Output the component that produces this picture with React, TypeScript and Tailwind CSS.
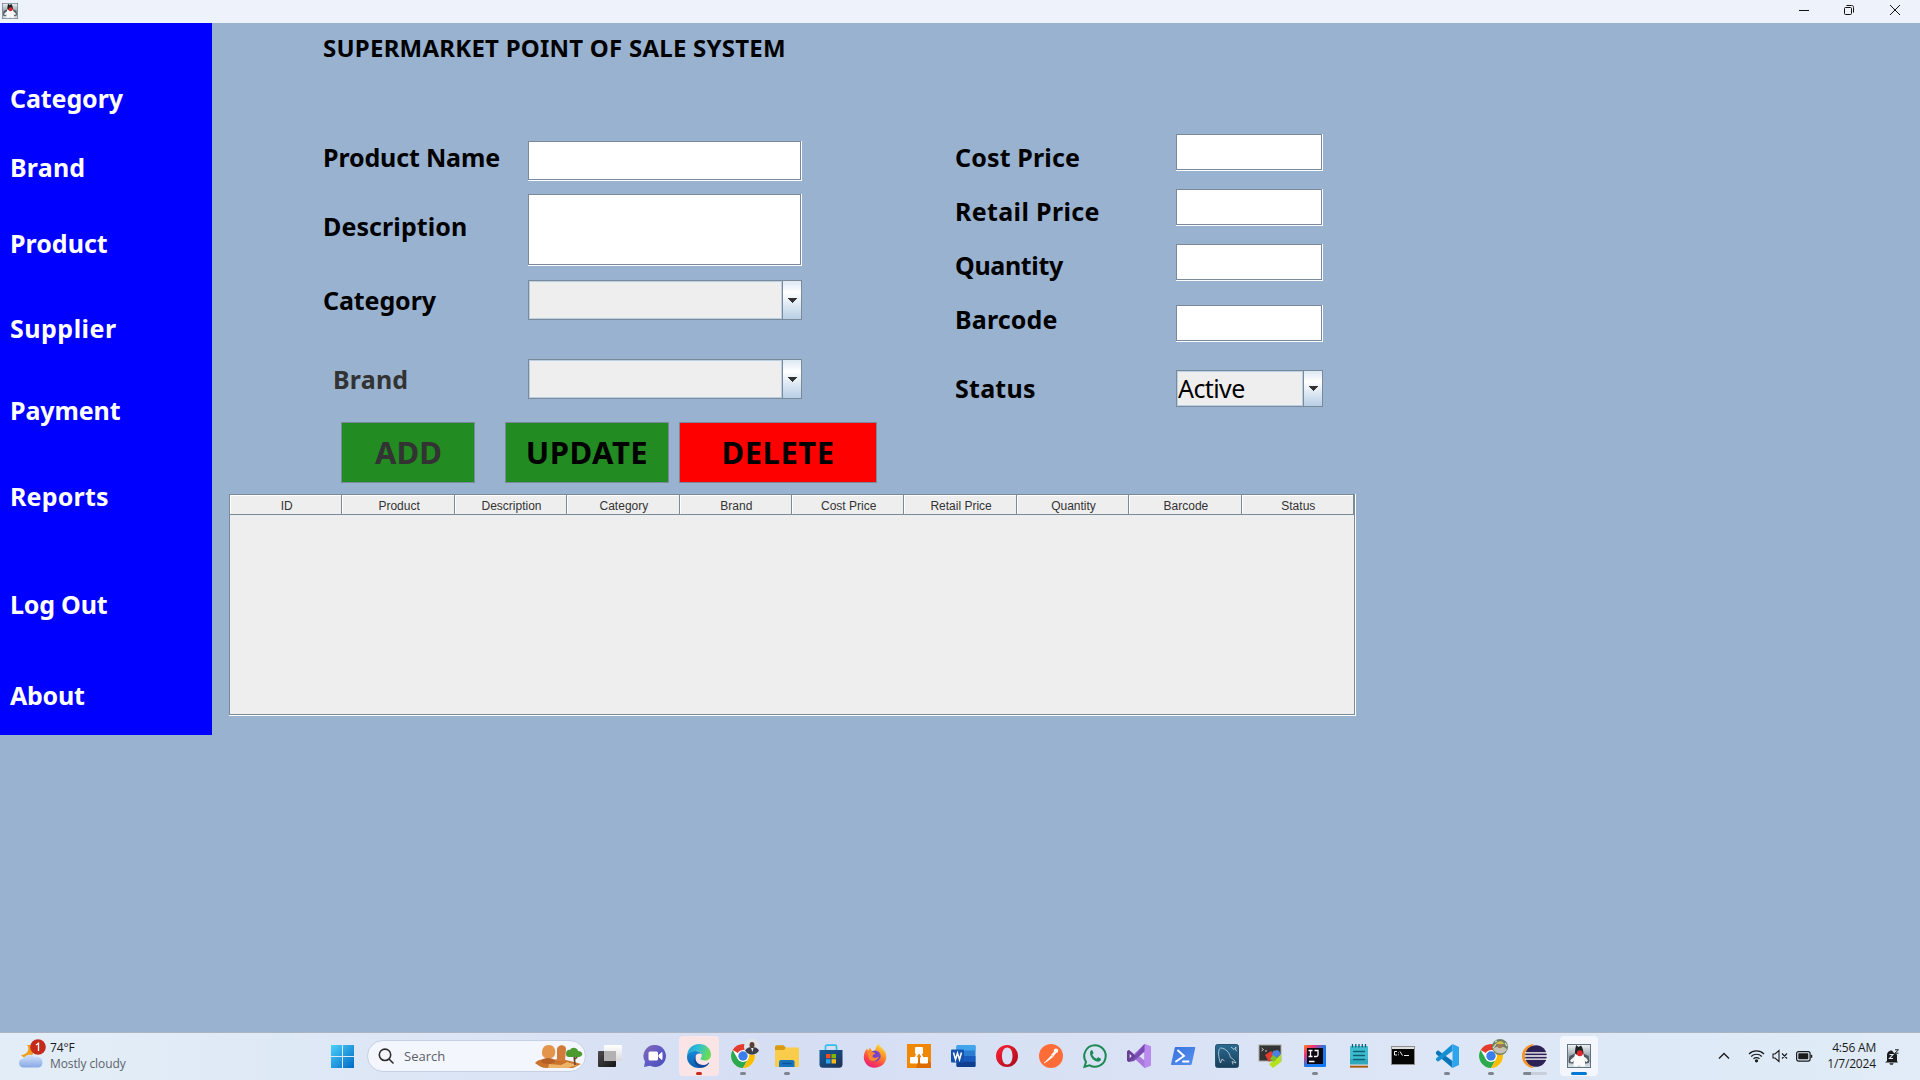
import React from "react";

const LABEL = "h-[30px] whitespace-nowrap text-[25px] font-bold leading-[30px] ";

const menu = [
  ["Category", "mt-[60px] tracking-[-0.1px]"],
  ["Brand", "mt-[39px] tracking-[0.2px]"],
  ["Product", "mt-[46px]"],
  ["Supplier", "mt-[55px] tracking-[0.5px]"],
  ["Payment", "mt-[52px] tracking-[-0.1px]"],
  ["Reports", "mt-[56px] tracking-[0.2px]"],
  ["Log Out", "mt-[78px] tracking-[-0.2px]"],
  ["About", "mt-[61px] tracking-[-0.25px]"],
];

const leftLabels = [
  ["Product Name", "mt-0 text-black tracking-[-0.15px]"],
  ["Description", "mt-[39px] text-black tracking-[0.1px]"],
  ["Category", "mt-[44px] text-black tracking-[-0.1px]"],
  ["Brand", "mt-[49px] pl-[10px] text-[#333333] tracking-[0.2px]"],
];

const rightLabels = [
  ["Cost Price", "mt-0 tracking-[0.15px]"],
  ["Retail Price", "mt-[24px] tracking-[0.35px]"],
  ["Quantity", "mt-[24px] tracking-[-0.35px]"],
  ["Barcode", "mt-[24px] tracking-[0.15px]"],
  ["Status", "mt-[39px] tracking-[0.25px]"],
];

const columns = ["ID", "Product", "Description", "Category", "Brand", "Cost Price", "Retail Price", "Quantity", "Barcode", "Status"];

function Field({ className }: { className: string }) {
  return (
    <div className={"border-b border-r border-white " + className}>
      <div className="h-full w-full border border-[#7a8a99] bg-white" />
    </div>
  );
}

function Combo({ className, value }: { className: string; value?: string }) {
  return (
    <div className={"flex border border-[#7a8a99] " + className}>
      <div className="min-w-0 flex-1 overflow-hidden border border-[#b8cfe5] bg-[#eeeeee] text-[25px] leading-[33px] tracking-[-0.6px] text-black">
        {value}
      </div>
      <div className="flex w-[19px] items-center border-l border-[#7a8a99] bg-linear-to-b from-[#dde8f3] via-white via-30% to-[#b8cfe5] pl-[4px]">
        <svg width="10" height="5" viewBox="0 0 10 5" shapeRendering="crispEdges"><path d="M0 0h10L5 5z" fill="#333" /></svg>
      </div>
    </div>
  );
}

function Duke({ size }: { size: number }) {
  return (
    <svg width={size} height={size} viewBox="0 0 24 24">
      <defs>
        <linearGradient id="dukeBg" x1="0" y1="0" x2="0" y2="1"><stop offset="0" stopColor="#f1f4f6" /><stop offset=".5" stopColor="#98a5ad" /><stop offset="1" stopColor="#dfe5e8" /></linearGradient>
      </defs>
      <rect x=".5" y=".5" width="23" height="23" fill="url(#dukeBg)" stroke="#5f7485" />
      <path d="M1.500 17l1-5 5.500-2.500V20L2 19zM22.500 17l-1-5-5-2.500V20l5-1z" fill="#50595f" />
      <path d="M8.500 8C7.500 12 6 17 6.500 22l3 .7 2.500-2 3 2 3-.7c.5-5-1-10-2.500-14z" fill="#fbfbfb" />
      <path d="M9.200 1l2.300 2L14 1.500c1.500 2 2.300 4.500 2.500 8-2.500 2-6 2-8.500 0C8 6 8.500 3 9.200 1z" fill="#1d2225" />
      <path d="M8 12.500c-2 1-4 2.500-5 4.500l1.800 1.500L8 16zM16.500 12.500c2 .7 3.500 2 4.500 4l-1.500 1.800-3-2.300z" fill="#f4f4f4" />
      <circle cx="12.800" cy="9.300" r="3" fill="#e0252b" />
    </svg>
  );
}

function Chrome({ second }: { second?: boolean }) {
  return (
    <svg width="30" height="30" viewBox="0 0 30 30" className="overflow-visible">
      <circle cx="15" cy="15" r="12" fill="#fff" />
      <path d="M15 15L4.610 9A12 12 0 0 1 25.390 9H15z" fill="#e33b2e" />
      <path d="M4.610 9A12 12 0 0 0 15 27l5.200-9-5.200 3-5.200-3z" fill="#2da94f" />
      <path d="M25.390 9A12 12 0 0 1 15 27l5.200-9L19 10.500V9z" fill="#fdbd00" />
      <circle cx="15" cy="15" r="6" fill="#fff" />
      <circle cx="15" cy="15" r="4.700" fill="#3b7ded" />
      <g transform="translate(24 6)">
        <circle r="8" fill={second ? "#70805f" : "#e2e5e7"} />
        {second ? (
          <>
            <path d="M-7 2c2-2 4-2.500 7-2.500s6 1 7 3A8 8 0 0 1-7 2z" fill="#c7c3b4" />
            <circle cy="-1.500" r="2.800" fill="#a17a53" />
            <path d="M-4-3c1-3 7-4 8 0z" fill="#d4bd4b" />
            <path d="M-7 1l3-4M5-4l2 3M-5-5l2-1" stroke="#dfe6cc" strokeWidth="1.200" />
          </>
        ) : (
          <>
            <path d="M-7 3.500C-5.500 1-3 0 0 0s6 1 7 3.500A8 8 0 0 1-7 3.500z" fill="#3a3f4b" />
            <ellipse cy="-2" rx="2.500" ry="3" fill="#5a4036" />
            <path d="M-1 1h2.500L.5 5z" fill="#e8e8ea" />
          </>
        )}
      </g>
    </svg>
  );
}

const S = ({ children }: { children: React.ReactNode }) => (
  <svg width="24" height="24" viewBox="0 0 24 24" className="overflow-visible">{children}</svg>
);

const TaskView = () => (
  <S>
    <defs>
      <linearGradient id="tv" x1="0" y1="0" x2="1" y2="1"><stop offset="0" stopColor="#4c4c4c" /><stop offset="1" stopColor="#151515" /></linearGradient>
      <linearGradient id="tvw" x1="0" y1="0" x2="0" y2="1"><stop offset="0" stopColor="#fff" /><stop offset="1" stopColor="#d9d9dc" /></linearGradient>
    </defs>
    <rect x="5" y="1" width="18" height="16" rx="1" fill="url(#tvw)" />
    <rect x="-1" y="7" width="18" height="16" rx="1" fill="url(#tv)" />
    <rect x="5" y="7" width="12" height="10" fill="#b2b2b2" />
  </S>
);

const Chat = () => (
  <S>
    <defs><linearGradient id="chat" x1="0" y1="0" x2="1" y2="1"><stop offset="0" stopColor="#8a67b5" /><stop offset=".5" stopColor="#5f5bc4" /><stop offset="1" stopColor="#4a4fb8" /></linearGradient></defs>
    <path d="M12 1a11 11 0 1 1-5 20.800L1 23l1-5.500A11 11 0 0 1 12 1z" fill="url(#chat)" />
    <rect x="5.500" y="7.500" width="9.500" height="9" rx="1.500" fill="#fff" />
    <path d="M16 11l3-2.500v7L16 13z" fill="#fff" stroke="#fff" strokeLinejoin="round" />
  </S>
);

const Edge = () => (
  <S>
    <defs>
      <linearGradient id="e1" x1="0" y1="0" x2="1" y2=".3"><stop offset="0" stopColor="#1a9fd9" /><stop offset=".5" stopColor="#31bfd4" /><stop offset="1" stopColor="#68dc58" /></linearGradient>
      <linearGradient id="e2" x1="0" y1="0" x2="0" y2="1"><stop offset="0" stopColor="#1689d8" /><stop offset="1" stopColor="#0d5eae" /></linearGradient>
    </defs>
    <path d="M12 0c7 0 12 5 12 10.500 0 4-3 6-6 6-2.500 0-4.500-1-4.500-2 0-.7 1.300-1 1.300-3 0-2.500-2.500-4.500-6-4.500C4 7 0 10.500 0 13 0 5 5.500 0 12 0z" fill="url(#e1)" />
    <path d="M0 13c0-3.500 4-6 8.500-6 3 0 5 1.300 6 3-3-1.500-6.500.5-6.500 4.500 0 5 4.500 9 9.500 8.500-1.700.7-3.500 1-5.500 1C5 24 0 19 0 13z" fill="url(#e2)" />
    <path d="M9 11.500c-2 6 3 10 8 9.500 2-.2 3.500-1.300 4.500-2.300.4-.3.900 0 .6.500C20 22.500 17 24 13.500 23.500 8 22.500 5.500 16 9 11.500z" fill="#12499a" />
  </S>
);

const Folder = () => (
  <S>
    <path d="M0 3c0-1 .7-1.700 1.700-1.700h7L11 4v3H0z" fill="#d99a10" />
    <path d="M0 6h9l2-2.500h12c.7 0 1 .5 1 1V22c0 .6-.4 1-1 1H1c-.6 0-1-.4-1-1z" fill="#f9cd4b" />
    <path d="M4 23v-5c0-1 .8-2 2-2h11.500c1.200 0 2 1 2 2v5z" fill="#1673bd" />
    <path d="M7 19.500h9.500" stroke="#0b5496" strokeWidth="1.500" />
  </S>
);

const Store = () => (
  <S>
    <defs><linearGradient id="st" x1="0" y1="0" x2="1" y2="1"><stop offset="0" stopColor="#115c9b" /><stop offset="1" stopColor="#203052" /></linearGradient></defs>
    <path d="M6.500 7V2.500c0-.8.500-1.300 1.300-1.300h8.400c.8 0 1.300.5 1.300 1.300V7" fill="none" stroke="#35bdf1" strokeWidth="1.700" />
    <path d="M.5 6h23v14.500c0 2-1.300 3.300-3.300 3.300H3.800c-2 0-3.300-1.300-3.300-3.300z" fill="url(#st)" />
    <path d="M7 10h4.500v4.300H7z" fill="#f04e23" /><path d="M12.500 10H17v4.300h-4.500z" fill="#7db900" />
    <path d="M7 15.200h4.500v4.300H7z" fill="#25a3ec" /><path d="M12.500 15.200H17v4.300h-4.500z" fill="#fdb813" />
  </S>
);

const Firefox = () => (
  <S>
    <defs>
      <linearGradient id="ff" x1=".8" y1="0" x2=".3" y2="1"><stop offset="0" stopColor="#ffe03b" /><stop offset=".4" stopColor="#ff9422" /><stop offset=".75" stopColor="#fb4150" /><stop offset="1" stopColor="#e5207b" /></linearGradient>
    </defs>
    <path d="M15.500 0c1 3 5 4.500 7 8.500 3 8-2.500 15-10.500 15.200C5 24 .5 18.500.8 12.500 1 9 2.500 6 4 4.500L5 7l2-3.500L9 7l3.500-.5C12 4 13.500 1.500 15.500 0z" fill="url(#ff)" />
    <circle cx="12" cy="12" r="5.500" fill="#7544c9" />
    <path d="M4.500 8C8 6.500 11 8 12.500 10c-2 .3-3 1-3 2.200 0 2 4 2.300 6.500 0-1 4.500-7 6.500-10 2.800z" fill="#fd8a2c" />
    <path d="M13 7c3 0 5 3 4.500 6.500C16 16 19 11 13 7z" fill="#9b4ed0" />
  </S>
);

const Drawio = () => (
  <S>
    <rect width="24" height="24" fill="#f08705" />
    <path d="M14 9l10 10v5H9z" fill="#dd6b00" />
    <path d="M12 7L6.500 17M12 7l5.500 10" stroke="#fff" strokeWidth="2" />
    <rect x="8" y="3" width="8" height="7" rx="1" fill="#fff" /><rect x="3" y="13" width="8" height="6.500" rx="1" fill="#fff" /><rect x="13" y="13" width="8" height="6.500" rx="1" fill="#fff" />
  </S>
);

const Word = () => (
  <S>
    <rect x="5.500" y="1" width="19" height="22" rx="1.500" fill="#2b7cd3" />
    <path d="M5.500 6.500V2.500C5.500 1.500 6 1 7 1h16c1 0 1.500.5 1.500 1.500v4z" fill="#41a5ee" />
    <path d="M5.500 12h19v5.500h-19z" fill="#185abd" /><path d="M5.500 17.500h19v4c0 1-.5 1.500-1.500 1.500H7c-1 0-1.500-.5-1.500-1.500z" fill="#103f91" />
    <rect x="0" y="5.500" width="13" height="13" rx="1" fill="#1552ae" />
    <path d="M2.500 8.500l2 7 2-6.500 2 6.500 2-7" fill="none" stroke="#fff" strokeWidth="1.500" />
  </S>
);

const Opera = () => (
  <S>
    <defs><linearGradient id="op" x1="0" y1="0" x2="1" y2="1"><stop offset="0" stopColor="#ff2436" /><stop offset="1" stopColor="#a60a18" /></linearGradient></defs>
    <path fillRule="evenodd" d="M12 1c6.500 0 11 5 11 11s-4.500 11-11 11S1 18 1 12 5.500 1 12 1zm.2 2.500C9 3.500 7 7 7 12s2 8.500 5.200 8.500 5.300-3.500 5.300-8.500-2-8.500-5.300-8.500z" fill="url(#op)" />
  </S>
);

const Postman = () => (
  <S>
    <circle cx="12" cy="12" r="12" fill="#ff6c37" />
    <path d="M6.500 17.500l7-7.500 2 2-8 6z" fill="#fff" /><path d="M12 11l3-3.500 2 2-3.500 3z" fill="#fff" />
    <circle cx="17" cy="6.700" r="2.200" fill="#fff" /><path d="M5 19l3-2" stroke="#fff" /><path d="M12.500 11l2 2" stroke="#ff6c37" strokeWidth=".7" />
  </S>
);

const WhatsApp = () => (
  <S>
    <path d="M12 1.300a10.700 10.700 0 1 1-5.300 20l-5.200 1.500 1.500-5A10.700 10.700 0 0 1 12 1.300z" fill="none" stroke="#1c8a55" strokeWidth="2" />
    <path d="M8 6.300c.5-.2 1.200-.2 1.500.3l1 2.300c0 .7-.8 1.200-1.200 1.800 1 1.900 2.500 3.200 4.300 4 .6-.5 1-1.500 1.700-1.500l2.300 1.200c.6.500.2 2-.5 2.700-4.700 3-13-6-9.100-10.800z" fill="#1c8a55" />
  </S>
);

const VisualStudio = () => (
  <S>
    <path d="M17.500 0L24 2.500v19L17.500 24 7 14 2 18l-2-1.200V7.200L2 6l5 4zM17.500 7.500L12 12l5.500 4.500zM2.500 9.500v5L5 12z" fillRule="evenodd" fill="#a878dc" />
    <path d="M17.500 0L24 2.500v19L17.500 24z" fill="#bb8aef" /><path d="M17.500 7.500V0L2 18l5-1z" fill="#7a4bb0" /><path fillRule="evenodd" d="M0 7.200L2 6l6.500 6L2 18l-2-1.200zM2.500 9.500v5L5 12z" fill="#654091" />
  </S>
);

const PowerShell = () => (
  <S>
    <defs><linearGradient id="ps" x1="0" y1="0" x2="1" y2="1"><stop offset="0" stopColor="#3772dd" /><stop offset="1" stopColor="#5791ef" /></linearGradient></defs>
    <path d="M5 3h18.500c.6 0 .8.400.7 1l-3.500 16c-.1.600-.6 1-1.200 1H.8c-.600 0-.9-.4-.7-1L3.700 4c.1-.6.600-1 1.300-1z" fill="url(#ps)" />
    <path d="M7 6.500l6 5.500-8 5.500M12 17.500h5.500" fill="none" stroke="#fff" strokeWidth="1.900" strokeLinecap="round" />
  </S>
);

const MySql = () => (
  <S>
    <defs><linearGradient id="my" x1="0" y1="0" x2="0" y2="1"><stop offset="0" stopColor="#2a6b94" /><stop offset="1" stopColor="#193e59" /></linearGradient></defs>
    <rect x=".5" y=".5" width="23" height="23" rx="2" fill="url(#my)" stroke="#2c5470" />
    <path d="M5.500 19C3.500 14 2.500 5.500 5.500 4c5 0 9 4.500 10 9.500 3 1.500 4 3 5.500 5.500l-4-1.500 1 3M5.500 19l1.500-4 2.500 2M16 3l3 2.500L21 3l-.5 3 1.500 1" fill="none" stroke="#cbd9e2" strokeWidth=".8" />
  </S>
);

const Terminal = () => (
  <S>
    <rect x="0" y="1" width="22" height="16" fill="#333" stroke="#a5a5a0" />
    <path d="M2.500 4l2 1.500-2 1.500M6 7h2" stroke="#eee" fill="none" strokeWidth=".8" />
    <path d="M6 11l6-4 3 3 1 3-6 5z" fill="#e23d31" /><path d="M14 7l5-1 3 4-5 5-4-4z" fill="#4c82df" /><path d="M17 15l5-5v8l-8 6-4-4z" fill="#b5e21b" /><path d="M14 11l4 3-3 4-4-3z" fill="#79c229" />
  </S>
);

const IntelliJ = () => (
  <S>
    <defs><linearGradient id="ij" x1="0" y1="0" x2="1" y2="1"><stop offset="0" stopColor="#fc801d" /><stop offset=".25" stopColor="#f0307b" /><stop offset=".5" stopColor="#2375e8" /><stop offset="1" stopColor="#087cfa" /></linearGradient></defs>
    <rect x="1" y="1" width="22" height="22" rx="1" fill="url(#ij)" /><rect x="4" y="4" width="16" height="16" fill="#0b0710" />
    <path d="M5.500 6.500h4M7.500 6.500v6M5.500 12.500h4M11.500 6.500h3.500v4.500c0 1-.7 1.500-1.700 1.500H11M6 17.500h5.500" fill="none" stroke="#fff" strokeWidth="1.300" />
  </S>
);

const Notepad = () => (
  <S>
    <rect x="3" y="2" width="18" height="19" rx="1" fill="#40bcd0" /><path d="M3 15h18v6H3z" fill="#2fa8be" />
    <path d="M3 22.500h18" stroke="#a85812" strokeWidth="2.300" /><path d="M3 21h18" stroke="#e9e2d8" />
    <path d="M5.500 0v3.500M8.800 0v3.500M12 0v3.500M15.300 0v3.500M18.500 0v3.500" stroke="#125c76" strokeWidth="1.300" />
    <path d="M6.500 7.500h11M6.500 11.500h11M6.500 15.500h11" stroke="#0a6073" strokeWidth="1.300" strokeLinecap="round" />
  </S>
);

const Cmd = () => (
  <S>
    <rect x=".5" y="2.500" width="23" height="18" fill="#050505" stroke="#8e8e8e" /><path d="M1 3h22v2H1z" fill="#dedede" />
    <path d="M6 7.500H3.500v3.500H6M7.500 8.500v.7M7.500 10.500v.7M9 7.500l2.500 4M13 11.500h5" fill="none" stroke="#eee" strokeWidth="1" />
  </S>
);

const VsCode = () => (
  <S>
    <path d="M1 8l2-1.700L17.500 17v7L1 10z" fill="#0a74ba" /><path d="M1 16l2 1.700L17.500 7V0L1 14.500z" fill="#168fd4" />
    <path d="M17.500 0L24 3v18l-6.500 3z" fill="#2da4ee" />
  </S>
);

const Eclipse = () => (
  <S>
    <path d="M11 0A12 12 0 0 0 11 24 15 15 0 0 1 11 0z" fill="#f79428" />
    <circle cx="13" cy="12" r="10.800" fill="#2c2255" />
    <path d="M2 8.800h22M1.700 12h22.600M2 15.200h22" stroke="#fff" strokeWidth="1.300" />
  </S>
);

const apps: { icon: React.ReactNode; bar?: string; tile?: string }[] = [
  { icon: <TaskView /> },
  { icon: <Chat /> },
  { icon: <Edge />, bar: "w-[6px] bg-[#c42b1c]", tile: "w-[40px] bg-[#fbe4e6]" },
  { icon: <Chrome />, bar: "w-[6px] bg-[#7f858f]" },
  { icon: <Folder />, bar: "w-[6px] bg-[#7f858f]" },
  { icon: <Store /> },
  { icon: <Firefox /> },
  { icon: <Drawio /> },
  { icon: <Word /> },
  { icon: <Opera /> },
  { icon: <Postman /> },
  { icon: <WhatsApp /> },
  { icon: <VisualStudio /> },
  { icon: <PowerShell /> },
  { icon: <MySql /> },
  { icon: <Terminal /> },
  { icon: <IntelliJ />, bar: "w-[6px] bg-[#7f858f]" },
  { icon: <Notepad /> },
  { icon: <Cmd /> },
  { icon: <VsCode />, bar: "w-[6px] bg-[#7f858f]" },
  { icon: <Chrome second />, bar: "w-[6px] bg-[#7f858f]" },
  { icon: <Eclipse />, bar: "w-[24px] bg-linear-to-r from-[#7f858f] from-33% to-[#c8cfdb] to-33%" },
  { icon: <Duke size={24} />, bar: "w-[16px] bg-[#0078d4]", tile: "w-[38px] bg-[#f3f6fc]" },
];

function Taskbar() {
  return (
    <footer className="flex h-[48px] w-full border-t border-[#aab4c2] bg-linear-to-r from-[#e2edf7] from-5% via-[#d5def3] via-40% to-[#e1ecf8] font-['Open_Sans','Noto_Sans',sans-serif] text-[12px]">
      <div className="flex w-[331px] pl-[18px] pt-[4px]">
        <svg width="28" height="32" viewBox="0 0 28 32">
          <defs><linearGradient id="cl" x1="0" y1="0" x2="0" y2="1"><stop offset="0" stopColor="#d4e3fb" /><stop offset="1" stopColor="#86a9e4" /></linearGradient></defs>
          <path d="M9 8c3 3 1 10-6 10 3 4 9 4 12-1l-1-9z" fill="#f39b1b" />
          <path d="M5.500 30.500a4.500 4.500 0 0 1 0-9 6.500 6.500 0 0 1 11-1.500c4-1 8 1 8 5.500 0 3-2 5-5 5z" fill="url(#cl)" />
          <circle cx="20" cy="10" r="7.800" fill="#c42b1c" />
          <path d="M18 8l2.500-1.800V14" fill="none" stroke="#fff" strokeWidth="1.300" />
        </svg>
        <div className="ml-[4px] pt-[3px] leading-[16px]">
          <div className="text-[#1b1b1b] tracking-[-0.1px]">74°F</div>
          <div className="tracking-[-0.1px] text-[#5d636b]">Mostly cloudy</div>
        </div>
      </div>
      <svg width="24" height="24" viewBox="0 0 24 24" className="mt-[11px]">
        <defs><linearGradient id="win" x1="0" y1="0" x2="1" y2="1"><stop offset="0" stopColor="#4bd0fb" /><stop offset="1" stopColor="#0069c4" /></linearGradient></defs>
        <path d="M0 1h11v11H0zM12 1h11v11H12zM0 13h11v11H0zM12 13h11v11H12z" fill="url(#win)" />
      </svg>
      <div className="ml-[12px] mt-[7px] flex h-[32px] w-[219px] items-center rounded-full border border-[#c6d0e4] bg-[#f3f6fd] pl-[10px]">
        <svg width="16" height="16" viewBox="0 0 16 16" fill="none" stroke="#2b2b2b" strokeWidth="1.600"><circle cx="7" cy="6.800" r="5.700" /><path d="M11 11l4 4" strokeLinecap="round" /></svg>
        <span className="ml-[10px] pt-px text-[13px] text-[#5b6068]">Search</span>
        <svg width="48" height="26" viewBox="0 0 48 26" className="ml-auto mr-[2px]">
          <path d="M0 20c3-4 8-4 12-3l15-1 12 3 7 2-8 4H12c-5 0-8-2-12-5z" fill="#c9732c" />
          <path d="M14 21l12 1 6-3 10 3-9 3H13z" fill="#edb366" />
          <path d="M7 11C7 5 9 2 14 2s7 5 6 9c-1 6-12 6-13 0z" fill="#e4954a" />
          <path d="M22 7c0-6 9-6 9-1l-1 12h-8z" fill="#d07b38" />
          <ellipse cx="13" cy="18" rx="7" ry="3" fill="#b65f24" />
          <path d="M39 12l1 10M40 16l4-4" stroke="#71472b" strokeWidth="1.700" />
          <path d="M31 11c0-3 2-5 4-4 2-4 8-2 8 1 5 0 6 5 1 6H34c-2 0-3-1-3-3z" fill="#4c9a2f" />
        </svg>
      </div>
      <div className="ml-[3px] flex">
        {apps.map((a, i) => (
          <div key={i} className="flex w-[44px] shrink-0 flex-col items-center pt-[3px]">
            <div className={"flex h-[40px] flex-col items-center rounded-[4px] " + (a.tile ?? "w-[40px]")}>
              <div className="mt-[8px] flex h-[24px] w-[24px] shrink-0 items-center justify-center">
                <div className="shrink-0">{a.icon}</div>
              </div>
              {a.bar && <div className={"mt-[4px] h-[3px] rounded-full " + a.bar} />}
            </div>
          </div>
        ))}
      </div>
      <div className="ml-auto flex items-start pr-[20px]">
        <svg width="12" height="8" viewBox="0 0 12 8" className="mt-[19px]" fill="none" stroke="#1b1b1b" strokeWidth="1.400"><path d="M1 6.500l5-5 5 5" /></svg>
        <svg width="17" height="14" viewBox="0 0 17 14" className="ml-[18px] mt-[16px]" fill="none" stroke="#1b1b1b" strokeWidth="1.200"><path d="M1 5a10.500 10.500 0 0 1 15 0M3.200 7.500a7.400 7.400 0 0 1 10.600 0M5.500 9.800a4.200 4.200 0 0 1 6 0" /><circle cx="8.500" cy="11.800" r="1" fill="#1b1b1b" /></svg>
        <svg width="16" height="14" viewBox="0 0 16 14" className="ml-[7px] mt-[16px]" fill="none" stroke="#1b1b1b" strokeWidth="1.100"><path d="M1 5v4h2l4 3.500v-11L3 5zM10 4.500l5 5M15 4.500l-5 5" /></svg>
        <svg width="17" height="11" viewBox="0 0 17 11" className="ml-[8px] mt-[18px]"><rect x=".6" y=".6" width="13.500" height="9.500" rx="2" fill="none" stroke="#1b1b1b" strokeWidth="1.200" /><rect x="2.300" y="2.300" width="10" height="6" rx=".8" fill="#1b1b1b" /><path d="M15.500 3.800v3" stroke="#1b1b1b" strokeWidth="1.500" /></svg>
        <div className="ml-[14px] w-[49px] pt-[7px] text-right leading-[16px] text-[#1b1b1b]">
          <div className="whitespace-nowrap tracking-[-0.2px]">4:56 AM</div>
          <div className="whitespace-nowrap tracking-[-0.15px]">1/7/2024</div>
        </div>
        <svg width="15" height="16" viewBox="0 0 15 16" className="ml-[9px] mt-[16px]"><path d="M2 12V6.500C2 3 4 1.500 7 1.500l2 2.500 3 1.500V12l1 1.500H0zM4.500 14.300h4c0 2-4 2-4 0z" fill="#1b1b1b" /><path d="M4.500 5.500h3.500L4.500 9.500h3.500" fill="none" stroke="#e1ecf8" strokeWidth="1.100" /><path d="M10 .8h3.500l-3.500 3.400h3.500" fill="none" stroke="#1b1b1b" strokeWidth="1" /></svg>
      </div>
    </footer>
  );
}

export default function App() {
  return (
    <div className="flex h-[1080px] w-[1920px] flex-col overflow-hidden bg-[#99b2d0] font-['Noto_Sans',sans-serif]">
      <header className="flex h-[23px] shrink-0 items-start bg-[#eef3fb]">
        <div className="ml-[2px] mt-[3px]"><Duke size={16} /></div>
        <svg width="102" height="12" viewBox="0 0 102 12" className="ml-auto mr-[19px] mt-[4px]" fill="none" stroke="#111" strokeWidth="1">
          <path d="M0 6.500h10" />
          <rect x="45.500" y="3.500" width="7" height="7" rx="1" /><path d="M47.500 1.500h5c1.500 0 2 .5 2 2v5" />
          <path d="M91 1l10 10M101 1L91 11" />
        </svg>
      </header>

      <div className="flex min-h-0 flex-1 items-start">
        <nav className="h-[712px] w-[212px] shrink-0 bg-[#0000ff] pl-[10px] text-white">
          {menu.map(([t, c]) => (
            <div key={t} className={LABEL + c}>{t}</div>
          ))}
        </nav>

        <main className="flex-1">
          <h1 className="ml-[111px] mt-[10px] h-[30px] whitespace-nowrap text-[24px] font-bold leading-[30px] tracking-[0.23px] text-black">SUPERMARKET POINT OF SALE SYSTEM</h1>

          <section className="ml-[111px] flex h-[359px] items-start">
            <div className="w-[205px] pt-[79px]">
              {leftLabels.map(([t, c]) => (
                <div key={t} className={LABEL + c}>{t}</div>
              ))}
            </div>
            <div className="w-[274px] pt-[78px]">
              <Field className="h-[40px]" />
              <Field className="mt-[13px] h-[72px]" />
              <Combo className="mt-[14px] h-[40px]" />
              <Combo className="mt-[39px] h-[40px]" />
            </div>
            <div className="ml-[153px] w-[221px] pt-[79px] text-black">
              {rightLabels.map(([t, c]) => (
                <div key={t} className={LABEL + c}>{t}</div>
              ))}
            </div>
            <div className="w-[147px] pt-[71px]">
              <Field className="h-[37px]" />
              <Field className="mt-[18px] h-[37px]" />
              <Field className="mt-[18px] h-[37px]" />
              <Field className="mt-[24px] h-[37px]" />
              <Combo className="mt-[28px] h-[37px]" value="Active" />
            </div>
          </section>

          <section className="ml-[129px] flex text-[31px] font-bold leading-[59px] tracking-[0.5px]">
            <button className="h-[61px] w-[134px] border border-[#7a8a99] bg-[#228b22] pl-px tracking-[0px] text-[#333333]">ADD</button>
            <button className="ml-[30px] h-[61px] w-[164px] border border-[#7a8a99] bg-[#228b22] text-black">UPDATE</button>
            <button className="ml-[10px] h-[61px] w-[198px] border border-[#7a8a99] bg-[#ff0000] text-black">DELETE</button>
          </section>

          <section className="ml-[17px] mt-[11px] h-[222px] w-[1127px] border-b border-r border-white">
            <div className="h-full border border-[#7a8a99] bg-[#eeeeee]">
              <div className="grid h-[20px] grid-cols-10 grid-rows-[20px]">
                {columns.map((c) => (
                  <div key={c} className="min-h-0 border-b border-r border-[#7a8a99] text-center font-['Liberation_Sans',sans-serif] text-[12px] text-[#333333]">
                    <div className="h-[19px] border-l border-t border-white pl-px leading-[20px]">{c}</div>
                  </div>
                ))}
              </div>
            </div>
          </section>
        </main>
      </div>

      <Taskbar />
    </div>
  );
}
